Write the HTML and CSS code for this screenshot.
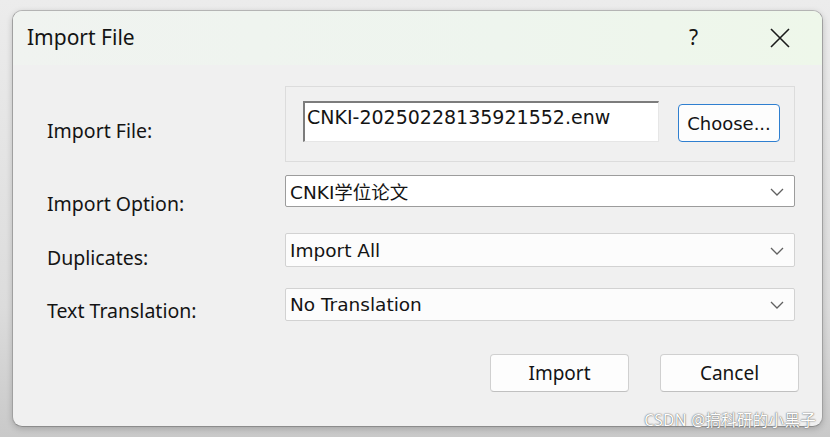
FILE: index.html
```html
<!DOCTYPE html>
<html>
<head>
<meta charset="utf-8">
<link rel="stylesheet" href="styles.css">
</head>
<body>
<div class="dialog">
  <div class="titlebar">
    <span class="title">Import File</span>
    <span class="help">?</span>
    <svg class="close" width="20" height="20" viewBox="0 0 20 20"><path d="M1 1 L19 19 M19 1 L1 19" stroke="#1a1a1a" stroke-width="1.6" fill="none"/></svg>
  </div>
  <div class="body">
    <div class="row row-file">
      <div class="label l1">Import File:</div>
      <div class="group">
        <div class="field">CNKI-20250228135921552.enw</div>
        <div class="choose">Choose...</div>
      </div>
    </div>
    <div class="row row-opt">
      <div class="label l2">Import Option:</div>
      <div class="combo focus"><span class="ctext">CNKI学位论文</span><svg class="chev" width="14" height="8" viewBox="0 0 14 8"><path d="M1 1 L7 7 L13 1" stroke="#606060" stroke-width="1.3" fill="none"/></svg></div>
    </div>
    <div class="row row-dup">
      <div class="label l3">Duplicates:</div>
      <div class="combo tall"><span class="ctext">Import All</span><svg class="chev" width="14" height="8" viewBox="0 0 14 8"><path d="M1 1 L7 7 L13 1" stroke="#606060" stroke-width="1.3" fill="none"/></svg></div>
    </div>
    <div class="row row-tr">
      <div class="label l4">Text Translation:</div>
      <div class="combo"><span class="ctext">No Translation</span><svg class="chev" width="14" height="8" viewBox="0 0 14 8"><path d="M1 1 L7 7 L13 1" stroke="#606060" stroke-width="1.3" fill="none"/></svg></div>
    </div>
    <div class="buttons">
      <div class="btn">Import</div>
      <div class="btn">Cancel</div>
    </div>
  </div>
</div>
<div class="watermark">CSDN @搞科研的小黑子</div>
</body>
</html>
```
FILE: styles.css
```css
html, body {
  margin: 0;
  padding: 0;
}
body {
  position: relative;
  width: 830px;
  height: 437px;
  overflow: hidden;
  background: linear-gradient(180deg, #ececec 0%, #dcdcdc 70%, #c9c9c9 100%);
  font-family: "Noto Sans", "Noto Sans CJK SC", sans-serif;
  color: #141414;
  padding-top: 10px;
  padding-left: 12px;
  box-sizing: border-box;
}
.dialog {
  width: 811px;
  height: 417px;
  box-sizing: border-box;
  border: 1px solid #b4b4b4;
  border-bottom-color: #8c8c8c;
  border-right-color: #a0a0a0;
  border-left-color: #a0a0a0;
  border-radius: 10px;
  background: #f0f0f0;
  box-shadow: 0 2px 6px rgba(0,0,0,0.18);
}
.titlebar {
  height: 54px;
  display: flex;
  align-items: center;
  background: linear-gradient(90deg, #f0f3f0 0%, #eef5ee 60%, #eef7ea 100%);
  border-radius: 9px 9px 0 0;
  padding-left: 14px;
}
.title {
  font-size: 21px;
  flex: 1;
  padding-bottom: 2px;
}
.help {
  font-size: 21px;
  margin-right: 72px;
  padding-bottom: 2px;
}
.close {
  margin-right: 32px;
}
.body {
  padding: 21px 0 0 34px;
}
.row {
  display: flex;
  align-items: flex-start;
}
.label {
  width: 238px;
  font-size: 19.5px;
  line-height: 26px;
  flex: none;
}
.l1 { margin-top: 32px; }
.l2 { margin-top: 16px; }
.l3 { margin-top: 12px; }
.l4 { margin-top: 10px; }
.group {
  width: 510px;
  height: 76px;
  box-sizing: border-box;
  border: 1px solid #dcdcdc;
  display: flex;
  align-items: flex-start;
  padding: 14px 0 0 17px;
}
.field {
  width: 356px;
  height: 41px;
  box-sizing: border-box;
  background: #fff;
  border-top: 2px solid #7c7c7c;
  border-left: 2px solid #7c7c7c;
  border-right: 1px solid #e6e6e6;
  border-bottom: 1px solid #e6e6e6;
  font-family: "DejaVu Sans", sans-serif;
  font-size: 19px;
  line-height: 28px;
  padding-left: 2px;
}
.choose {
  margin-left: 19px;
  margin-top: 3px;
  width: 102px;
  height: 38px;
  box-sizing: border-box;
  border: 1px solid #2f7fd0;
  border-radius: 4px;
  background: #fdfdfd;
  font-family: "DejaVu Sans", sans-serif;
  font-size: 18px;
  display: flex;
  align-items: center;
  justify-content: center;
}
.combo {
  width: 510px;
  height: 33px;
  box-sizing: border-box;
  border: 1px solid #d2d2d2;
  border-radius: 2px;
  background: #fcfcfc;
  display: flex;
  align-items: center;
  padding: 0 10px 0 4px;
}
.combo.focus {
  border-color: #9c9c9c;
  background: #fff;
  height: 32px;
}
.combo.tall { height: 34px; }
.ctext {
  flex: 1;
  font-size: 18.5px;
  font-family: "DejaVu Sans", "Noto Sans CJK SC", sans-serif;
}
.chev { margin-top: 1px; }
.row-opt { margin-top: 13px; height: 32px; }
.row-dup { margin-top: 26px; height: 34px; }
.row-tr { margin-top: 21px; height: 33px; }
.buttons {
  display: flex;
  justify-content: flex-end;
  gap: 31px;
  padding-right: 23px;
  margin-top: 33px;
}
.btn {
  width: 139px;
  height: 38px;
  box-sizing: border-box;
  border: 1px solid #d0d0d0;
  border-bottom-color: #c0c0c0;
  border-radius: 4px;
  background: #fdfdfd;
  font-size: 19px;
  display: flex;
  align-items: center;
  justify-content: center;
}
.watermark {
  position: absolute;
  right: 14px;
  top: 409px;
  font-size: 15.5px;
  line-height: 22px;
  color: #ffffff;
  text-shadow: 0 0 1px #555, 0 0 2px #888;
  letter-spacing: 0.3px;
}
```
